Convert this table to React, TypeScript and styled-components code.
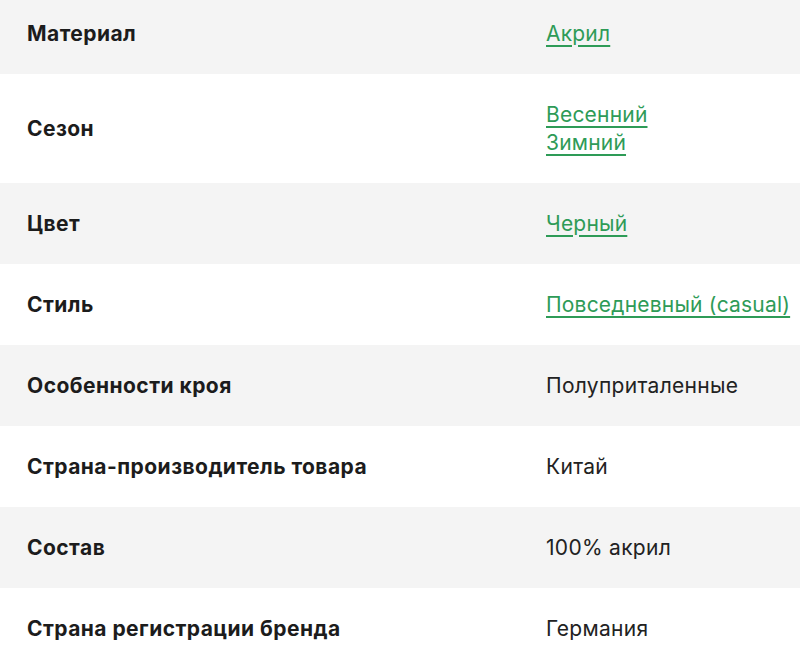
import React from "react";
import styled, { createGlobalStyle } from "styled-components";

const Global = createGlobalStyle`
  html, body { margin: 0; padding: 0; background: #fff; }
  body { font-family: Inter, "Open Sans", "Liberation Sans", sans-serif; color: #1f1f1f; }
`;

const Table = styled.div`
  display: flex;
  flex-direction: column;
  width: 800px;
  height: 665px;
  overflow: hidden;
`;

const Inner = styled.div`
  display: flex;
  flex-direction: column;
  margin-top: -7px;
`;

const Row = styled.div<{ $shaded: boolean }>`
  display: grid;
  grid-template-columns: 519px 1fr;
  align-items: center;
  padding: 26.5px 0 26.5px 27px;
  background: ${(p) => (p.$shaded ? "#f4f4f4" : "#ffffff")};
`;

const Label = styled.div`
  font-size: 21px;
  line-height: 28px;
  font-weight: 700;
  letter-spacing: 0.45px;
  color: #1c1c1c;
`;

const Values = styled.div`
  display: flex;
  flex-direction: column;
  align-items: flex-start;
`;

const Value = styled.span`
  font-size: 21px;
  line-height: 28px;
  font-weight: 400;
  letter-spacing: 0.3px;
  color: #222;
`;

const Link = styled.a`
  font-size: 21px;
  line-height: 28px;
  letter-spacing: 0.2px;
  color: #2e9b57;
  text-decoration: underline;
  text-decoration-thickness: 1.5px;
  text-underline-offset: 4px;
  white-space: nowrap;
`;

type Item = { label: string; values: string[]; link?: boolean };

const items: Item[] = [
  { label: "Материал", values: ["Акрил"], link: true },
  { label: "Сезон", values: ["Весенний", "Зимний"], link: true },
  { label: "Цвет", values: ["Черный"], link: true },
  { label: "Стиль", values: ["Повседневный (casual)"], link: true },
  { label: "Особенности кроя", values: ["Полуприталенные"] },
  { label: "Страна-производитель товара", values: ["Китай"] },
  { label: "Состав", values: ["100% акрил"] },
  { label: "Страна регистрации бренда", values: ["Германия"] },
];

export default function App() {
  return (
    <>
      <Global />
      <Table>
        <Inner>
          {items.map((it, i) => (
            <Row key={it.label} $shaded={i % 2 === 0}>
              <Label>{it.label}</Label>
              <Values>
                {it.values.map((v) =>
                  it.link ? (
                    <Link key={v} href="#">
                      {v}
                    </Link>
                  ) : (
                    <Value key={v}>{v}</Value>
                  )
                )}
              </Values>
            </Row>
          ))}
        </Inner>
      </Table>
    </>
  );
}
